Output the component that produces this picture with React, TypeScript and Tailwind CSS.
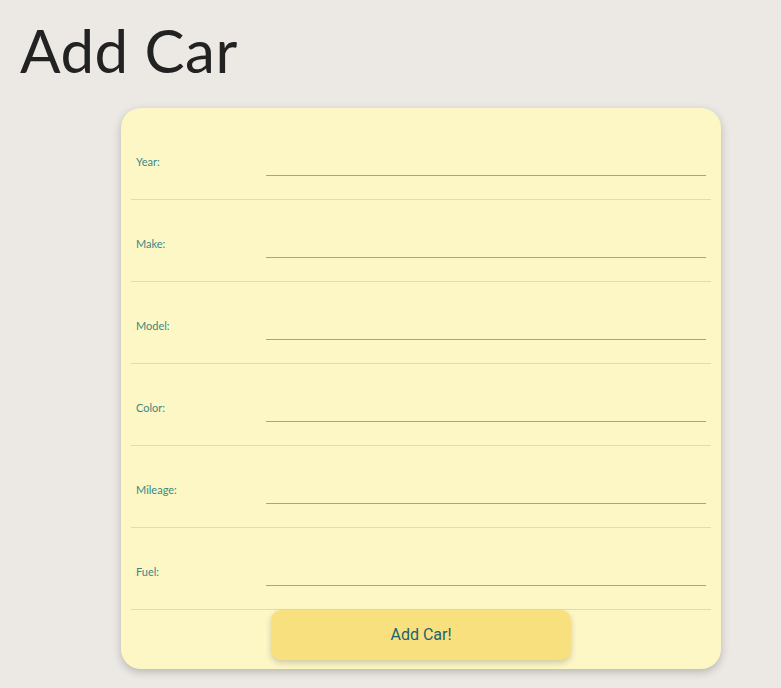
import React from "react";

const fields = ["Year:", "Make:", "Model:", "Color:", "Mileage:", "Fuel:"];

export default function App() {
  return (
    <div className="min-h-[688px] bg-[#ece9e4] font-['Lato',sans-serif]">
      <h1 className="pl-5 pt-[14px] text-[60px] leading-[72px] font-normal tracking-[0.5px] text-[#222222]">
        Add Car
      </h1>

      <div className="ml-[121px] mt-[22px] w-[600px] rounded-[20px] bg-[#fdf7c6] px-[10px] pt-[10px] pb-[9px] shadow-[0_3px_8px_rgba(0,0,0,0.22)]">
        {fields.map((label) => (
          <div
            key={label}
            className="flex h-[82px] items-center border-b border-[#e3dcaa] pt-2"
          >
            <label className="w-[135px] pl-[5px] text-[11px] text-[#3b8783]">
              {label}
            </label>
            <input
              type="text"
              className="mr-[5px] mb-[4px] h-[30px] flex-1 border-0 border-b border-[#a3a293] bg-transparent outline-none"
            />
          </div>
        ))}
        <div className="flex justify-center">
          <button className="h-[50px] w-[300px] rounded-[10px] bg-[#f9e07f] font-['Roboto',sans-serif] text-[16px] text-[#1b6270] shadow-[0_3px_6px_rgba(0,0,0,0.18)]">
            Add Car!
          </button>
        </div>
      </div>
    </div>
  );
}
